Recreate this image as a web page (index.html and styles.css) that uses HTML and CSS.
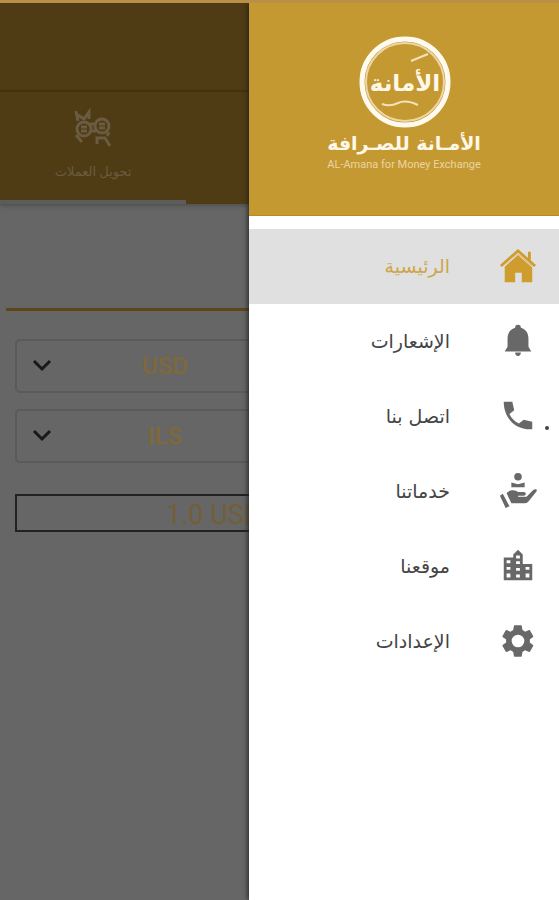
FILE: index.html
```html
<!DOCTYPE html>
<html lang="ar">
<head>
  <meta charset="UTF-8" />
  <meta name="viewport" content="width=device-width, initial-scale=1.0"/>
  <title>الأمانة للصرافة</title>
  <link rel="stylesheet" href="styles.css">
</head>
<body>

  <main class="page">
    <header class="topbar"></header>
    <nav class="tabs">
      <a href="#convert" class="tab" dir="rtl">
        <svg width="40" height="40" viewBox="0 0 40 40" fill="none" stroke="currentColor" stroke-width="3">
          <circle cx="11" cy="21" r="7"/>
          <circle cx="29" cy="18" r="7"/>
          <path d="M5 13L3 3M5 7l6 4 5-7v7M3 27l6 7M36 24l-2 4M24 36v-6h8l5 8M17 16h5M17 23h6M8 19h6M8 23h6M26 16h6M26 20h6"/>
        </svg>
        <span>تحويل العملات</span>
      </a>
    </nav>

    <section class="converter">
      <hr class="divider">
      <!-- Currencies -->
      <div class="field">
        <select aria-label="From">
          <option>USD</option>
        </select>
        <svg class="chevron" width="20" height="14" viewBox="0 0 20 14"><path d="M2 2l8 8 8-8"/></svg>
      </div>
      <div class="field">
        <select aria-label="To">
          <option>ILS</option>
        </select>
        <svg class="chevron" width="20" height="14" viewBox="0 0 20 14"><path d="M2 2l8 8 8-8"/></svg>
      </div>
      <div class="rate">1.0 USD</div>
    </section>
  </main>

  <!-- Drawer -->
  <aside class="drawer" dir="rtl">
    <div class="brand">
      <svg class="logo" width="96" height="96" viewBox="0 0 96 96">
        <circle cx="49" cy="48" r="43" fill="none" stroke="#fffaf0" stroke-width="5"/>
        <circle cx="49" cy="48" r="39" fill="none" stroke="#ecd7a6" stroke-width="2"/>
        <text x="49" y="57" text-anchor="middle">الأمانة</text>
        <path d="M55 27l17-7M26 70q8 3 16-1t20 2" fill="none" stroke="#f3e2bb" stroke-width="2"/>
      </svg>
      <h1>الأمـانة للصـرافة</h1>
      <p dir="ltr">AL-Amana for Money Exchange</p>
    </div>

    <nav class="menu">
      <a href="#home" class="item active">
        <svg viewBox="0 0 40 40">
          <path d="M20 7L35 20v17H24V27h-7v10H6V20z"/>
          <path d="M2 20L20 4l18 16M32 5v9" fill="none" stroke="currentColor" stroke-width="3"/>
          <path d="M4 22L20 8l16 14" fill="none" stroke="#e0e0e0" stroke-width="1"/>
        </svg>
        <span>الرئيسية</span>
      </a>
      <a href="#notifications" class="item">
        <svg viewBox="0 0 40 40">
          <path d="M20 3c2 0 3 1 3 3 6 2 8 6 8 12v8l3 5H6l3-5v-8c0-6 2-10 8-12 0-2 1-3 3-3zM17 32h6c0 5-6 5-6 0z"/>
        </svg>
        <span>الإشعارات</span>
      </a>
      <a href="#contact" class="item">
        <svg viewBox="0 0 40 40">
          <path d="M5 5h9l2 9-5 4c2 5 6 8 10 10l5-4 9 2v8C17 35 5 22 5 5z"/>
        </svg>
        <span>اتصل بنا</span>
        <i class="dot"></i>
      </a>
      <a href="#services" class="item">
        <svg viewBox="0 0 40 40">
          <circle cx="20" cy="5" r="4"/>
          <path d="M13 16v-5l7 2 7-2v5zM1 25l3-2 7 13-4 2zM8 22c5-4 9-3 12-1h6c3 0 3 4 0 4h-6v1h9l7-7c3-2 5 0 3 2l-8 10q-2 2-4 2H13z"/>
        </svg>
        <span>خدماتنا</span>
      </a>
      <a href="#location" class="item">
        <svg viewBox="0 0 40 40">
          <path fill-rule="evenodd" d="M5 11h10V8l5-5 5 5v10h10v17H5zM8 14v3h4v-3zm0 7v3h4v-3zm0 7v4h4v-4zM18 9v3h4V9zm0 6v3h4v-3zm0 7v3h4v-3zm0 7v3h4v-3zM28 21v3h4v-3zm0 7v4h4v-4z"/>
        </svg>
        <span>موقعنا</span>
      </a>
      <a href="#settings" class="item">
        <svg viewBox="0 0 24 24">
          <path d="M19.4 13c.1-.3.1-.7.1-1s0-.7-.1-1l2.100-1.600c.2-.2.2-.4.1-.6l-2-3.500c-.1-.2-.4-.3-.6-.2l-2.500 1c-.5-.4-1.100-.7-1.700-1l-.4-2.600c0-.3-.2-.5-.5-.5h-4c-.3 0-.5.2-.5.5L9 5.100c-.6.3-1.200.6-1.700 1l-2.500-1c-.2-.1-.5 0-.6.2l-2 3.500c-.1.2-.1.5.1.6L4.500 11v2l-2.200 1.600c-.2.2-.2.4-.1.6l2 3.500c.1.2.4.3.6.2l2.500-1c.5.4 1.100.7 1.700 1l.4 2.600c0 .3.2.5.5.5h4c.3 0 .5-.2.5-.5l.4-2.600c.6-.3 1.200-.6 1.700-1l2.500 1c.2.1.5 0 .6-.2l2-3.500c.1-.2.1-.5-.1-.6zM12 16a4 4 0 1 1 0-8 4 4 0 0 1 0 8z"/>
        </svg>
        <span>الإعدادات</span>
      </a>
    </nav>
  </aside>

</body>
</html>
```
FILE: styles.css
```css
* {
  box-sizing: border-box;
  margin: 0;
  padding: 0;
}
body {
  font-family: Roboto, "DejaVu Sans", sans-serif;
  background: #666;
  border-top: 3px solid #b98f49;
  min-height: 100vh;
  position: relative;
  overflow-x: hidden;
}
a {
  text-decoration: none;
}

/* Page behind the drawer */
.topbar {
  height: 89px;
  background: #4f3c14;
  border-bottom: 2px solid #403009;
}
.tabs {
  display: grid;
  grid-template-columns: repeat(3, 1fr);
  height: 112px;
  background: #4f3c14;
  box-shadow: 0 2px 4px #505050;
}
.tab {
  display: flex;
  flex-direction: column;
  align-items: center;
  gap: 16px;
  padding-top: 16px;
  color: #6b5b40;
  font-size: 13px;
  border-bottom: 4px solid #5c5c5c;
}
.converter {
  padding: 104px 0 0 15px;
}
.divider {
  height: 3px;
  margin: 0 0 28px -9px;
  border: none;
  background: #5d4718;
}
.field {
  position: relative;
  width: 300px;
  margin-bottom: 16px;
}
.field select {
  display: block;
  width: 100%;
  height: 54px;
  appearance: none;
  background: transparent;
  border: 2px solid #5a5a5a;
  border-radius: 5px;
  color: #806838;
  font-family: inherit;
  font-size: 24px;
  font-weight: 500;
  text-align: center;
  text-align-last: center;
}
.chevron {
  position: absolute;
  left: 17px;
  top: 20px;
  fill: none;
  stroke: #181818;
  stroke-width: 3;
  pointer-events: none;
}
.rate {
  height: 38px;
  margin: 31px 15px 0 0;
  padding-left: 149px;
  border: 2px solid #222;
  color: #735e36;
  font-size: 27px;
  line-height: 38px;
}

/* Drawer */
.drawer {
  position: absolute;
  top: 0;
  right: 0;
  bottom: 0;
  width: 310px;
  max-width: 80%;
  background: #fff;
  box-shadow: -1px 0 5px #222;
}
.brand {
  display: flex;
  flex-direction: column;
  align-items: center;
  height: 213px;
  padding-top: 31px;
  background: #c59932;
  border-bottom: 1px solid #b98b20;
  color: #fff8e8;
}
.logo text {
  fill: #fff8e8;
  font-family: "DejaVu Sans", sans-serif;
  font-size: 23px;
  font-weight: bold;
}
.brand h1 {
  font-family: "DejaVu Sans", sans-serif;
  font-size: 19px;
  line-height: 26px;
}
.brand p {
  color: #ead4a2;
  font-size: 11px;
  line-height: 18px;
}
.menu {
  padding-top: 13px;
}
.item {
  position: relative;
  display: flex;
  align-items: center;
  gap: 49px;
  height: 75px;
  padding: 0 22px 2px;
  color: #686868;
}
.item svg {
  width: 38px;
  height: 38px;
  fill: currentColor;
}
.item span {
  color: #444;
  font-family: "DejaVu Sans", sans-serif;
  font-size: 19px;
}
.item.active {
  background: #e0e0e0;
  color: #cf9d2d;
}
.item.active span {
  color: #cda64e;
}
.dot {
  position: absolute;
  right: 10px;
  bottom: 24px;
  width: 4px;
  height: 4px;
  border-radius: 50%;
  background: #444;
}
```
